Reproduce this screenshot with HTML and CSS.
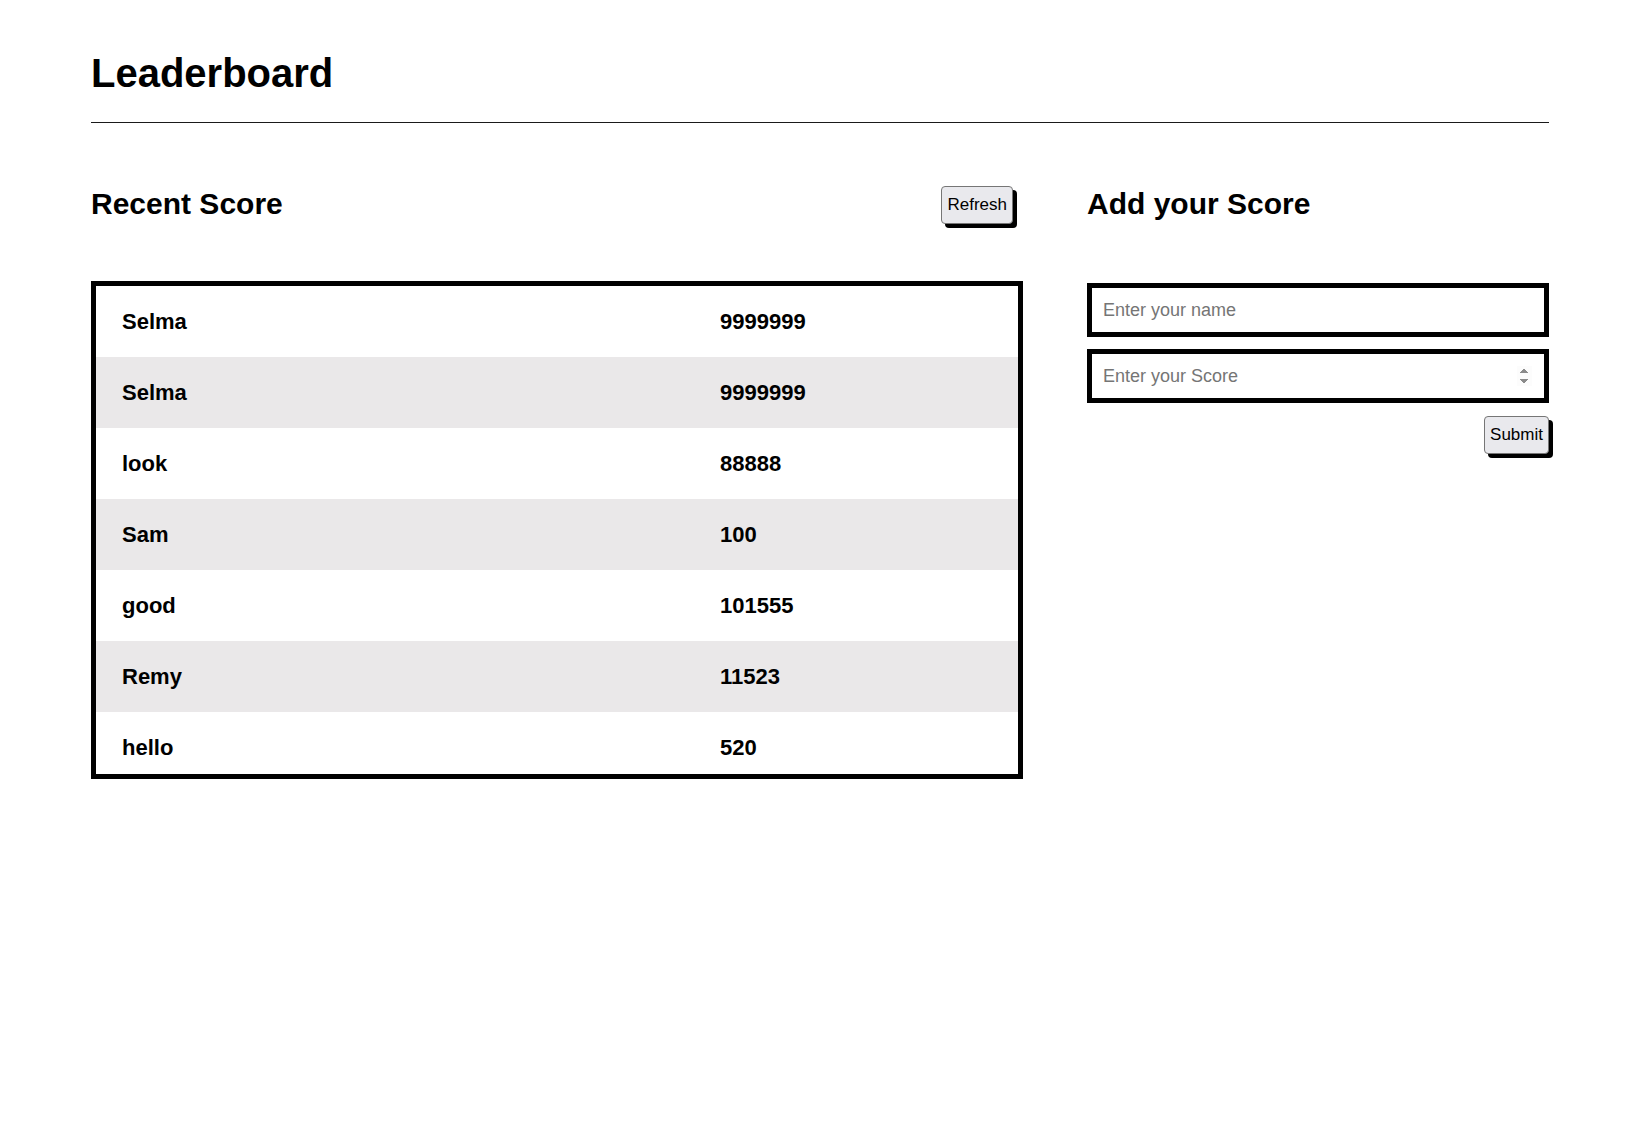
FILE: index.html
```html
<!DOCTYPE html>
<html lang="en">
<head>
<meta charset="utf-8">
<title>Leaderboard</title>
<link rel="stylesheet" href="styles.css">
</head>
<body>
<div class="page">
  <header class="top">
    <h1 class="title">Leaderboard</h1>
    <hr class="rule">
  </header>
  <main class="columns">
    <section class="recent">
      <div class="section-head">
        <h2 class="section-title">Recent Score</h2>
        <button class="btn btn-refresh" type="button">Refresh</button>
      </div>
      <div class="board">
        <div class="row"><span class="name">Selma</span><span class="score">9999999</span></div>
        <div class="row alt"><span class="name">Selma</span><span class="score">9999999</span></div>
        <div class="row"><span class="name">look</span><span class="score">88888</span></div>
        <div class="row alt"><span class="name">Sam</span><span class="score">100</span></div>
        <div class="row"><span class="name">good</span><span class="score">101555</span></div>
        <div class="row alt"><span class="name">Remy</span><span class="score">11523</span></div>
        <div class="row"><span class="name">hello</span><span class="score">520</span></div>
      </div>
    </section>
    <section class="add">
      <div class="section-head">
        <h2 class="section-title">Add your Score</h2>
      </div>
      <form class="form">
        <input class="field" type="text" placeholder="Enter your name">
        <input class="field" type="number" placeholder="Enter your Score">
        <div class="actions">
          <button class="btn btn-submit" type="button">Submit</button>
        </div>
      </form>
    </section>
  </main>
</div>
</body>
</html>
```

FILE: styles.css
```css
* {
  box-sizing: border-box;
}

html, body {
  margin: 0;
  padding: 0;
  background: #ffffff;
}

body {
  font-family: "Liberation Sans", Arial, Helvetica, sans-serif;
  color: #000000;
}

.page {
  padding: 50px 91px 0 91px;
}

.title {
  margin: 0;
  font-size: 40px;
  font-weight: bold;
  line-height: 46px;
}

.rule {
  margin: 26px 0 0 0;
  border: 0;
  height: 1px;
  background: #1a1a1a;
}

.columns {
  display: grid;
  grid-template-columns: 932px 1fr;
  column-gap: 64px;
  margin-top: 64px;
}

.section-head {
  display: flex;
  justify-content: space-between;
  align-items: flex-start;
  height: 94px;
}

.section-title {
  margin: 0;
  font-size: 30px;
  font-weight: bold;
  line-height: 34px;
}

.btn {
  font-family: "Liberation Sans", Arial, Helvetica, sans-serif;
  font-size: 17px;
  line-height: 20px;
  color: #000;
  background: #e9e9ed;
  border: 1px solid #767676;
  border-radius: 4px;
  padding: 7px 5px;
  box-shadow: 4px 4px 0 #000;
  cursor: pointer;
}

.btn-refresh {
  margin-top: -1px;
  margin-right: 10px;
  padding: 8px 5px;
}

.btn-submit {
  padding: 8px 5px;
}

.board {
  height: 498px;
  border: 5px solid #000;
  overflow: hidden;
}

.row {
  display: grid;
  grid-template-columns: 598px 1fr;
  align-items: center;
  height: 71px;
  padding-left: 26px;
  font-size: 22px;
  font-weight: bold;
  background: #ffffff;
}

.row.alt {
  background: #eae8e9;
}

.add .section-head {
  height: 96px;
}

.form {
  display: flex;
  flex-direction: column;
}

.field {
  display: block;
  width: 100%;
  height: 54px;
  border: 5px solid #000;
  padding: 0 12px 0 11px;
  font-family: "Liberation Sans", Arial, Helvetica, sans-serif;
  font-size: 18px;
  color: #000;
  background: #fff;
  outline: none;
  margin-bottom: 12px;
}

.field::placeholder {
  color: #757575;
}

.field::-webkit-inner-spin-button {
  opacity: 1;
}

.actions {
  display: flex;
  justify-content: flex-end;
  margin-top: 1px;
}
```
